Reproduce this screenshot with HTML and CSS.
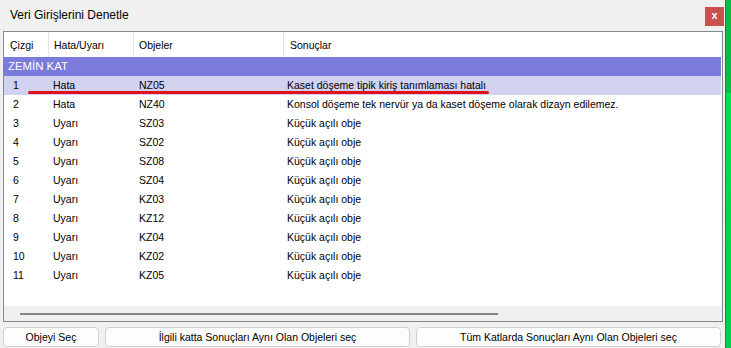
FILE: index.html
```html
<!DOCTYPE html>
<html lang="tr">
<head>
  <meta charset="UTF-8" />
  <meta name="viewport" content="width=device-width, initial-scale=1.0">
  <title>Veri Girişlerini Denetle</title>
  <link rel="stylesheet" href="styles.css">
</head>
<body>
  <div class="screen">
    <div class="dialog">
      <div class="title-bar">
        <span class="title">Veri Girişlerini Denetle</span>
        <button class="close-button">x</button>
      </div>

      <div class="list-view">
        <div class="row header">
          <div class="cell">Çizgi</div>
          <div class="cell">Hata/Uyarı</div>
          <div class="cell">Objeler</div>
          <div class="cell">Sonuçlar</div>
        </div>
        <div class="group-row">ZEMİN KAT</div>
        <div id="rows"></div>
        <div class="h-scroll"><div class="thumb"></div></div>
        <div class="mark-line"></div>
      </div>

      <div class="button-bar">
        <button class="btn btn-small">Objeyi Seç</button>
        <button class="btn">İlgili katta Sonuçları Aynı Olan Objeleri seç</button>
        <button class="btn">Tüm Katlarda Sonuçları Aynı Olan Objeleri seç</button>
      </div>
    </div>
    <div class="side-edge"></div>
  </div>

  <script>
    const results = [
      ["1", "Hata", "NZ05", "Kaset döşeme tipik kiriş tanımlaması hatalı"],
      ["2", "Hata", "NZ40", "Konsol döşeme tek nervür ya da kaset döşeme olarak dizayn edilemez."],
      ["3", "Uyarı", "SZ03", "Küçük açılı obje"],
      ["4", "Uyarı", "SZ02", "Küçük açılı obje"],
      ["5", "Uyarı", "SZ08", "Küçük açılı obje"],
      ["6", "Uyarı", "SZ04", "Küçük açılı obje"],
      ["7", "Uyarı", "KZ03", "Küçük açılı obje"],
      ["8", "Uyarı", "KZ12", "Küçük açılı obje"],
      ["9", "Uyarı", "KZ04", "Küçük açılı obje"],
      ["10", "Uyarı", "KZ02", "Küçük açılı obje"],
      ["11", "Uyarı", "KZ05", "Küçük açılı obje"]
    ];

    function renderRows() {
      const box = document.getElementById("rows");
      results.forEach((r, i) => {
        const div = document.createElement("div");
        div.className = i === 0 ? "row item selected" : "row item";
        div.innerHTML = r.map(t => `<div class="cell">${t}</div>`).join("");
        box.appendChild(div);
      });
    }

    renderRows();
  </script>
</body>
</html>
```

FILE: styles.css
```css
body {
  margin: 0;
  background-color: #f1f0f1;
  font-family: "Liberation Sans", Arial, sans-serif;
  font-size: 10.5px;
  color: #000;
}
.screen {
  display: flex;
  width: 731px;
  height: 348px;
  overflow: hidden;
}
.dialog {
  width: 725px;
  display: flex;
  flex-direction: column;
}
.side-edge {
  width: 5px;
  border-left: 1px solid #4a6a52;
  background: linear-gradient(#0cbc44 0, #0cbc44 93px, #00e050 93px, #00d04a 100%);
}
.title-bar {
  height: 31px;
  display: flex;
  align-items: center;
  justify-content: space-between;
  padding: 0 1px 0 10px;
}
.title {
  font-size: 12px;
  margin-top: -1px;
}
.close-button {
  width: 19px;
  height: 19px;
  margin-top: 1px;
  border: none;
  background-color: #c85050;
  color: white;
  font-weight: bold;
  font-size: 11px;
  font-family: "Liberation Sans", Arial, sans-serif;
  padding: 0 0 2px 0;
  line-height: 1;
}
.list-view {
  position: relative;
  margin: 0 2px 0 3px;
  height: 289px;
  border: 1px solid #828790;
  background-color: white;
  display: flex;
  flex-direction: column;
}
.row {
  display: grid;
  grid-template-columns: 44px 85px 150px 1fr;
}
.row .cell {
  white-space: nowrap;
}
.header {
  height: 25px;
  align-items: center;
}
.header .cell {
  padding-left: 5px;
  border-left: 1px solid #e5e5e5;
  height: 25px;
  line-height: 27px;
}
.header .cell:first-child {
  border-left: none;
  padding-left: 6px;
}
.header .cell:last-child {
  padding-left: 6px;
}
.group-row {
  height: 19px;
  line-height: 19px;
  background-color: #7a7bdb;
  color: white;
  font-size: 11.4px;
  padding-left: 4px;
  margin-right: 1px;
}
#rows {
  flex: 1;
}
.item {
  height: 19px;
  line-height: 19px;
}
.item .cell {
  padding-left: 5px;
}
.item .cell:first-child {
  padding-left: 9px;
}
.item .cell:nth-child(3) {
  padding-left: 6px;
}
.item .cell:last-child {
  padding-left: 4px;
}
.selected {
  background-color: #d1d1f0;
  margin-right: 1px;
}
.h-scroll {
  height: 15px;
  background-color: #f0f0f0;
  display: flex;
  align-items: center;
  padding-left: 16px;
}
.thumb {
  width: 478px;
  height: 2px;
  background-color: #858585;
  margin-top: 1px;
}
.mark-line {
  position: absolute;
  left: 24px;
  top: 59px;
  width: 461px;
  height: 3px;
  background-color: #e0101c;
  border-radius: 2px;
}
.button-bar {
  display: flex;
  gap: 6px;
  padding: 5px 4px 0 3px;
}
.btn {
  flex: 1;
  height: 20px;
  border: 1px solid #d0d0d0;
  border-radius: 4px;
  background-color: #fdfdfd;
  font-family: "Liberation Sans", Arial, sans-serif;
  font-size: 10.5px;
  color: #000;
  padding: 0;
}
.btn-small {
  flex: 0 0 96px;
}
```
